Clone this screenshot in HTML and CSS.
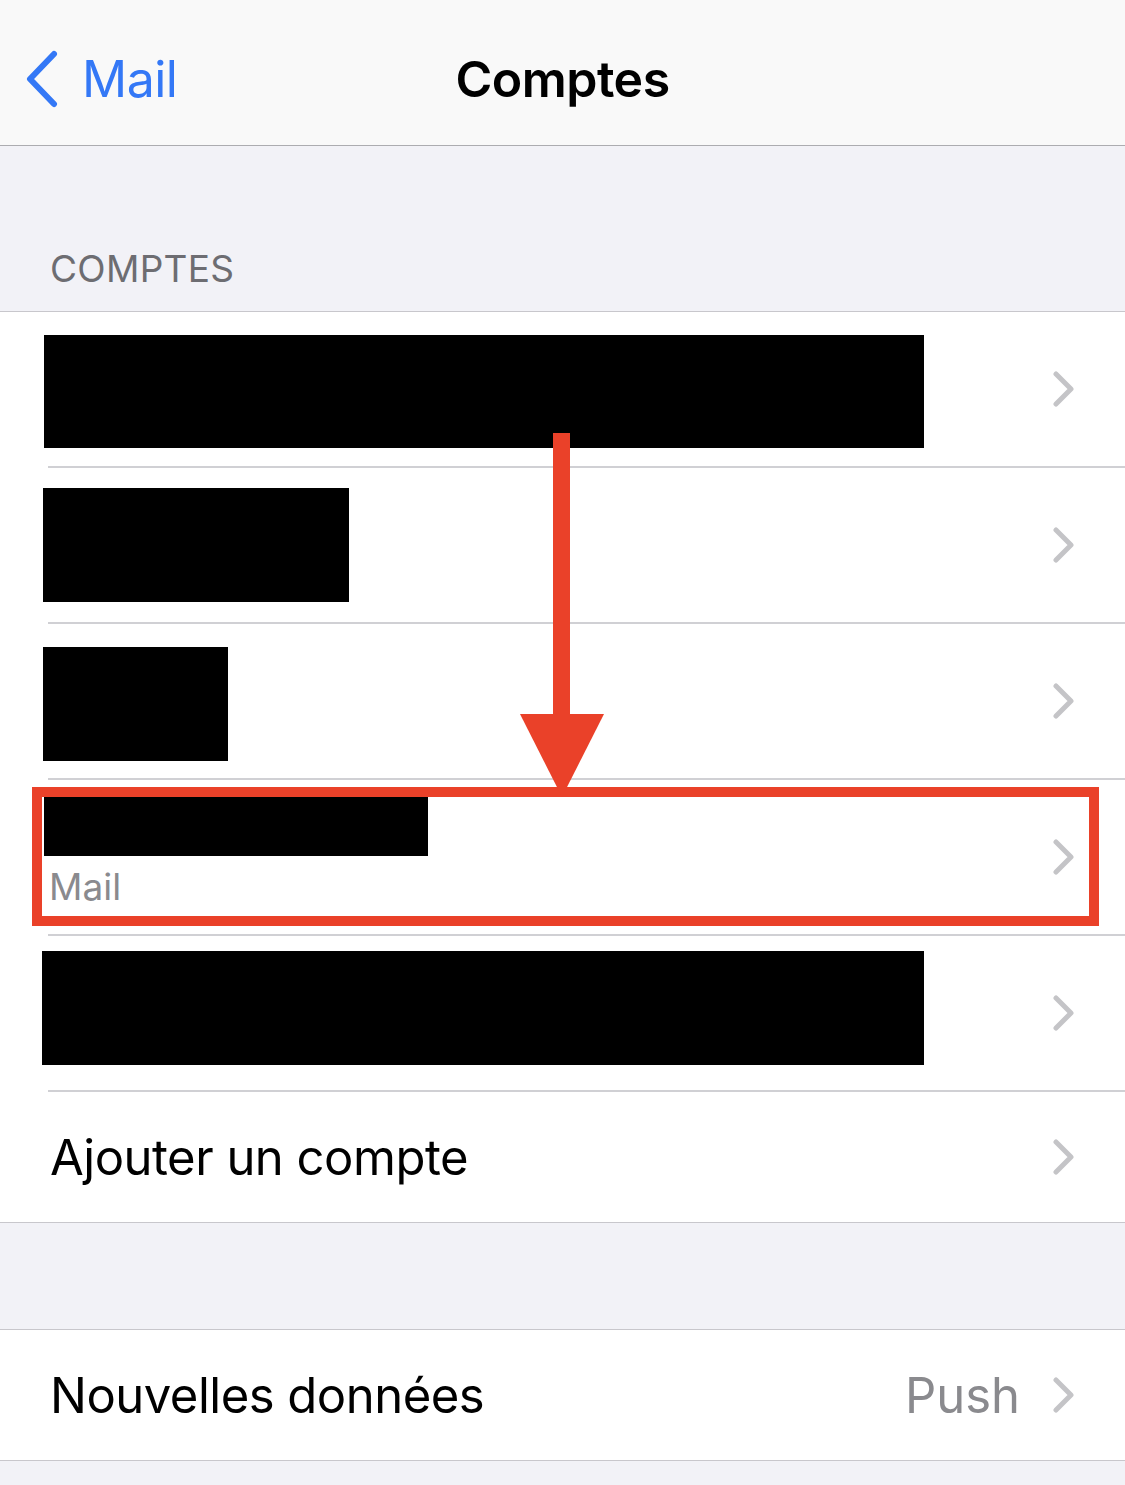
FILE: index.html
```html
<!DOCTYPE html>
<html lang="fr">
<head>
<meta charset="utf-8">
<title>Comptes</title>
<link rel="stylesheet" href="styles.css">
</head>
<body>
<div class="page">
  <header class="nav">
    <div class="back">
      <svg class="back-icon" width="36" height="58" viewBox="0 0 36 58"><path d="M30 4 L6 29 L30 54" fill="none" stroke="#3478f6" stroke-width="6" stroke-linecap="round" stroke-linejoin="round"/></svg>
      <span class="back-label">Mail</span>
    </div>
    <h1 class="title">Comptes</h1>
  </header>

  <div class="section-header">COMPTES</div>

  <ul class="group">
    <li class="row row-acct">
      <div class="row-inner">
        <div class="content"><div class="redact r1"></div></div>
        <svg class="chev" width="22" height="36" viewBox="0 0 22 36"><path d="M3 3 L18 18 L3 33" fill="none" stroke="#c4c4c7" stroke-width="5" stroke-linecap="round" stroke-linejoin="round"/></svg>
      </div>
    </li>
    <li class="row row-acct">
      <div class="row-inner">
        <div class="content"><div class="redact r2"></div></div>
        <svg class="chev" width="22" height="36" viewBox="0 0 22 36"><path d="M3 3 L18 18 L3 33" fill="none" stroke="#c4c4c7" stroke-width="5" stroke-linecap="round" stroke-linejoin="round"/></svg>
      </div>
    </li>
    <li class="row row-acct">
      <div class="row-inner">
        <div class="content"><div class="redact r3"></div></div>
        <svg class="chev" width="22" height="36" viewBox="0 0 22 36"><path d="M3 3 L18 18 L3 33" fill="none" stroke="#c4c4c7" stroke-width="5" stroke-linecap="round" stroke-linejoin="round"/></svg>
      </div>
    </li>
    <li class="row row-acct">
      <div class="row-inner">
        <div class="content content-stack"><div class="redact r4"></div><div class="sub">Mail</div></div>
        <svg class="chev" width="22" height="36" viewBox="0 0 22 36"><path d="M3 3 L18 18 L3 33" fill="none" stroke="#c4c4c7" stroke-width="5" stroke-linecap="round" stroke-linejoin="round"/></svg>
      </div>
    </li>
    <li class="row row-acct">
      <div class="row-inner">
        <div class="content"><div class="redact r5"></div></div>
        <svg class="chev" width="22" height="36" viewBox="0 0 22 36"><path d="M3 3 L18 18 L3 33" fill="none" stroke="#c4c4c7" stroke-width="5" stroke-linecap="round" stroke-linejoin="round"/></svg>
      </div>
    </li>
    <li class="row row-add">
      <div class="row-inner last">
        <div class="content"><span class="label">Ajouter un compte</span></div>
        <svg class="chev" width="22" height="36" viewBox="0 0 22 36"><path d="M3 3 L18 18 L3 33" fill="none" stroke="#c4c4c7" stroke-width="5" stroke-linecap="round" stroke-linejoin="round"/></svg>
      </div>
    </li>
  </ul>

  <div class="spacer"></div>

  <ul class="group">
    <li class="row row-add">
      <div class="row-inner last">
        <div class="content"><span class="label">Nouvelles données</span></div>
        <span class="value">Push</span>
        <svg class="chev" width="22" height="36" viewBox="0 0 22 36"><path d="M3 3 L18 18 L3 33" fill="none" stroke="#c4c4c7" stroke-width="5" stroke-linecap="round" stroke-linejoin="round"/></svg>
      </div>
    </li>
  </ul>

  <div class="highlight-box"></div>
  <svg class="arrow" width="100" height="370" viewBox="0 0 100 370">
    <rect x="33" y="0" width="17" height="285" fill="#ea4129"/>
    <polygon points="0,281 84,281 42,364" fill="#ea4129"/>
  </svg>
</div>
</body>
</html>
```
FILE: styles.css
```css
* { box-sizing: border-box; }
html, body { margin: 0; padding: 0; }
body {
  background: #f2f2f7;
  font-family: Inter, "Liberation Sans", sans-serif;
  color: #000;
}
.page {
  position: relative;
  width: 1125px;
  height: 1485px;
  overflow: hidden;
  background: #f2f2f7;
}
.nav {
  height: 146px;
  background: #f9f9f9;
  border-bottom: 1px solid #acacb0;
  display: flex;
  align-items: center;
  position: relative;
}
.back {
  display: flex;
  align-items: center;
  padding-left: 24px;
  gap: 22px;
  margin-top: 12px;
}
.back-icon { display: block; }
.back-label {
  color: #3478f6;
  font-size: 50px;
  letter-spacing: -0.5px;
}
.title {
  position: absolute;
  left: 0; right: 0;
  text-align: center;
  margin: 0;
  font-size: 50px;
  font-weight: 600;
  letter-spacing: -0.5px;
  top: 52px;
  line-height: 1.1;
}
.section-header {
  height: 165px;
  padding-left: 50px;
  padding-bottom: 20px;
  display: flex;
  align-items: flex-end;
  font-size: 37px;
  color: #6d6d72;
  letter-spacing: 0.3px;
}
.group {
  list-style: none;
  margin: 0;
  padding: 0;
  background: #fff;
  border-top: 1px solid #c8c7cc;
  border-bottom: 1px solid #c8c7cc;
}
.row { padding-left: 48px; }
.row-inner {
  display: flex;
  align-items: center;
  border-bottom: 2px solid #d0d0d4;
  padding-right: 50px;
}
.row-inner.last { border-bottom: none; }
.row-acct .row-inner { height: 156px; }
.row-add .row-inner { height: 130px; }
.content { flex: 1; display: flex; align-items: center; }
.content-stack { flex-direction: column; align-items: flex-start; }
.redact { background: #000; }
.r1 { width: 880px; height: 113px; margin-left: -4px; margin-top: 4px; }
.r2 { width: 306px; height: 114px; margin-left: -5px; }
.r3 { width: 185px; height: 114px; margin-left: -5px; margin-top: 5px; }
.r4 { width: 384px; height: 61px; margin-left: -4px; margin-top: -12px; }
.sub {
  font-size: 37px;
  color: #8a8a8e;
  margin-top: 11px;
  line-height: 1.1;
  margin-left: 1px;
}
.r5 { width: 882px; height: 114px; margin-left: -6px; margin-top: -10px; }
.label {
  font-size: 49px;
  letter-spacing: -0.5px;
  padding-left: 2px;
}
.value {
  font-size: 49px;
  color: #8a8a8e;
  margin-right: 33px;
}
.chev { display: block; flex: none; }
.spacer { height: 106px; }
.highlight-box {
  position: absolute;
  left: 32px;
  top: 787px;
  width: 1067px;
  height: 139px;
  border: 10px solid #ea4129;
}
.arrow {
  position: absolute;
  left: 520px;
  top: 433px;
}
```
